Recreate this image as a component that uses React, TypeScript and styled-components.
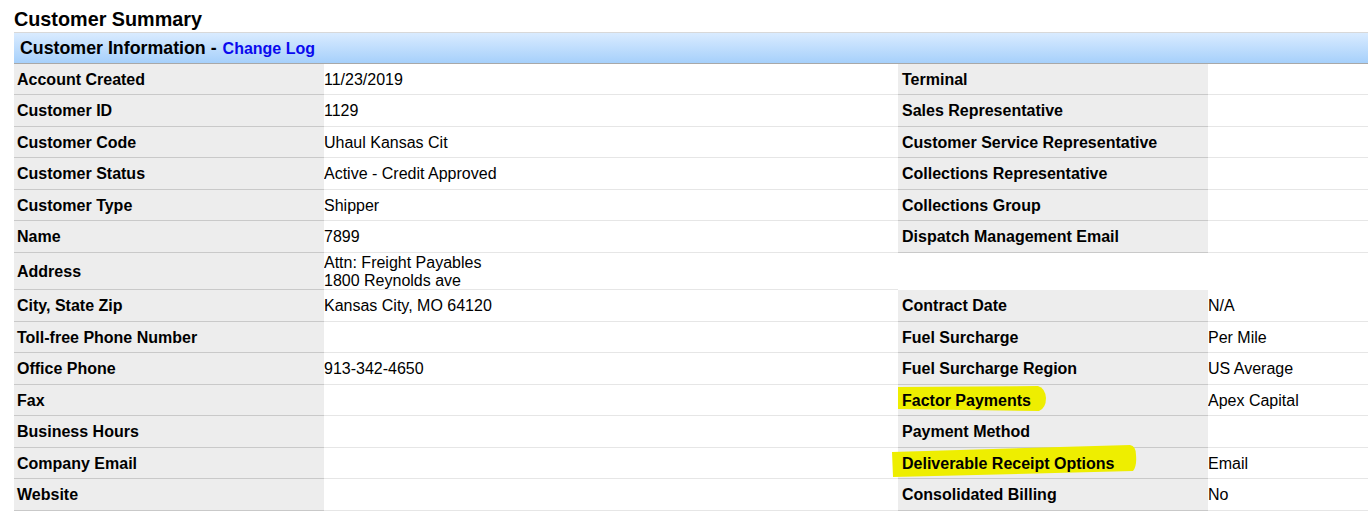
import React, { ReactElement } from 'react';
import styled, { createGlobalStyle } from 'styled-components';

const GlobalStyle = createGlobalStyle`
	html,
	body {
		margin: 0;
		padding: 0;
		background: #ffffff;
		overflow: hidden;
	}

	body {
		font-family: 'Liberation Sans', Arial, Helvetica, sans-serif;
		font-size: 16px;
		color: #000000;
	}
`;

const Page = styled.div`
	padding-left: 14px;
	width: 1354px;
`;

const Title = styled.h1`
	margin: 0 0 1px;
	padding-top: 8px;
	font-size: 19.8px;
	line-height: 23px;
	font-weight: bold;
`;

const SectionHeader = styled.div`
	display: flex;
	align-items: center;
	padding: 1px 0 0 6px;
	box-sizing: border-box;
	height: 32px;
	border-top: 1px solid #d8d8d8;
	border-bottom: 1px solid #a8a8a8;
	background: linear-gradient(#d9ebff, #a6d0fb);
	font-size: 17.8px;
	font-weight: bold;

	a {
		color: #0a0aee;
		font-size: 16px;
		text-decoration: none;
		margin-left: 6px;
		padding-top: 1px;
	}
`;

const Sheet = styled.div`
	display: grid;
	grid-template-columns: 310px 574px 310px 1fr;
	grid-template-rows: 31px 32px 31px 32px 31px 32px 37px 32px 31px 32px 31px 32px 31px 32px;
`;

const Label = styled.div<{ $blank?: boolean; $inset?: number }>`
	position: relative;
	display: flex;
	align-items: center;
	padding: 1px 0 0 ${(props) => props.$inset ?? 3}px;
	font-weight: bold;
	background: ${(props) => (props.$blank ? 'transparent' : '#ededed')};
	border-bottom: 1px solid ${(props) => (props.$blank ? 'transparent' : '#c9c9c9')};

	span {
		position: relative;
		z-index: 1;
	}
`;

const Value = styled.div<{ $blank?: boolean }>`
	display: flex;
	flex-direction: column;
	justify-content: center;
	padding-top: 1px;
	border-bottom: 1px solid ${(props) => (props.$blank ? 'transparent' : '#e6e6e6')};
`;

const Marker = styled.svg<{ $wide?: boolean }>`
	position: absolute;
	z-index: 0;
	left: ${(props) => (props.$wide ? '-6px' : '0')};
	top: ${(props) => (props.$wide ? '-3px' : '1px')};
	overflow: visible;
`;

function FactorMark(): ReactElement {
	return (
		<Marker width="150" height="26" viewBox="0 0 150 26">
			<path d="M0 1 L140 0 Q147 2 148 12 Q148 22 141 25 L0 23 Z" fill="#eeee00" />
		</Marker>
	);
}

function ReceiptMark(): ReactElement {
	return (
		<Marker $wide width="246" height="33" viewBox="0 0 246 33">
			<path d="M0 7 L238 0 Q244 1 244 10 Q245 21 241 26 L1 32 Z" fill="#eeee00" />
		</Marker>
	);
}

type Side = { label: string; value?: string; mark?: 'factor' | 'receipt' } | null;

interface Row {
	label: string;
	value: string[];
	right: Side;
}

const rows: Row[] = [
	{ label: 'Account Created', value: ['11/23/2019'], right: { label: 'Terminal' } },
	{ label: 'Customer ID', value: ['1129'], right: { label: 'Sales Representative' } },
	{ label: 'Customer Code', value: ['Uhaul Kansas Cit'], right: { label: 'Customer Service Representative' } },
	{ label: 'Customer Status', value: ['Active - Credit Approved'], right: { label: 'Collections Representative' } },
	{ label: 'Customer Type', value: ['Shipper'], right: { label: 'Collections Group' } },
	{ label: 'Name', value: ['7899'], right: { label: 'Dispatch Management Email' } },
	{ label: 'Address', value: ['Attn: Freight Payables', '1800 Reynolds ave'], right: null },
	{ label: 'City, State Zip', value: ['Kansas City, MO 64120'], right: { label: 'Contract Date', value: 'N/A' } },
	{ label: 'Toll-free Phone Number', value: [], right: { label: 'Fuel Surcharge', value: 'Per Mile' } },
	{ label: 'Office Phone', value: ['913-342-4650'], right: { label: 'Fuel Surcharge Region', value: 'US Average' } },
	{ label: 'Fax', value: [], right: { label: 'Factor Payments', value: 'Apex Capital', mark: 'factor' } },
	{ label: 'Business Hours', value: [], right: { label: 'Payment Method' } },
	{ label: 'Company Email', value: [], right: { label: 'Deliverable Receipt Options', value: 'Email', mark: 'receipt' } },
	{ label: 'Website', value: [], right: { label: 'Consolidated Billing', value: 'No' } },
];

export default function App(): ReactElement {
	return (
		<Page>
			<GlobalStyle />
			<Title>Customer Summary</Title>
			<SectionHeader>
				Customer Information -<a href="#">Change Log</a>
			</SectionHeader>
			<Sheet>
				{rows.map((row) => (
					<React.Fragment key={row.label}>
						<Label>
							<span>{row.label}</span>
						</Label>
						<Value>
							{row.value.map((line) => (
								<div key={line}>{line}</div>
							))}
						</Value>
						<Label $blank={!row.right} $inset={4}>
							{row.right?.mark === 'factor' && <FactorMark />}
							{row.right?.mark === 'receipt' && <ReceiptMark />}
							<span>{row.right?.label}</span>
						</Label>
						<Value $blank={!row.right}>{row.right?.value}</Value>
					</React.Fragment>
				))}
			</Sheet>
		</Page>
	);
}
